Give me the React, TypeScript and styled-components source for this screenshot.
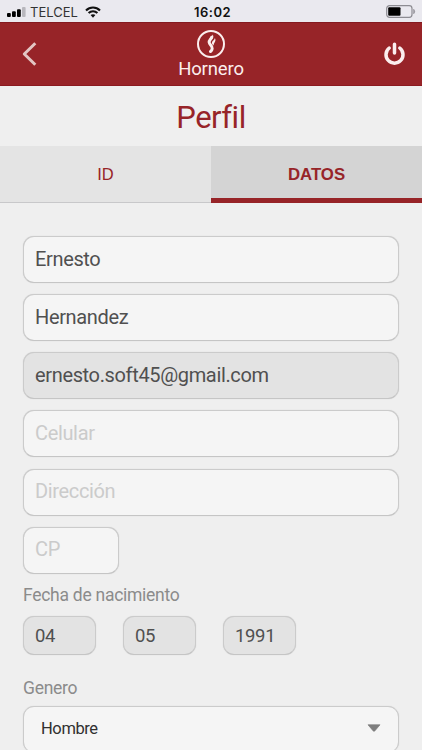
import React from "react";
import styled, { createGlobalStyle } from "styled-components";

const GlobalStyle = createGlobalStyle`
  * { box-sizing: border-box; }
  html, body { margin: 0; height: 750px; overflow: hidden; background: #efefef; }
  body { font-family: Roboto, "Liberation Sans", sans-serif; }
`;

const Screen = styled.div`
  width: 422px;
  height: 750px;
  overflow: hidden;
  background: #efefef;
`;

const StatusBar = styled.div`
  height: 22px;
  display: grid;
  grid-template-columns: 1fr auto 1fr;
  align-items: center;
  padding: 1px 6px 0 7px;
  background: #eae9ef;
  color: #111;
  font-family: Inter, sans-serif;
`;

const Carrier = styled.div`
  display: flex;
  align-items: center;
`;

const CarrierName = styled.span`
  margin: 0 7px 0 4px;
  font-size: 13px;
  line-height: 20px;
  color: #333;
  letter-spacing: 0;
`;

const Clock = styled.div`
  padding-left: 2px;
  font-size: 13px;
  line-height: 20px;
  font-weight: 600;
  letter-spacing: 0.5px;
`;

const Battery = styled.div`
  display: flex;
  justify-content: flex-end;
`;

const Header = styled.header`
  height: 64px;
  display: grid;
  grid-template-columns: 60px 1fr 60px;
  background: #972428;
  border-top: 1px solid #84191f;
  border-bottom: 1px solid #8b1a20;
  color: #fbeeee;
`;

const HeaderButton = styled.button<{ $end?: boolean }>`
  display: flex;
  align-items: center;
  justify-content: ${(p) => (p.$end ? "flex-end" : "flex-start")};
  padding: ${(p) => (p.$end ? "0 16px 1px 0" : "0 0 0 21px")};
  border: 0;
  background: none;
  color: inherit;
`;

const Brand = styled.div`
  display: flex;
  flex-direction: column;
  align-items: center;
  padding-top: 6px;
`;

const BrandName = styled.div`
  font-size: 18.5px;
  line-height: 20px;
  letter-spacing: -0.15px;
`;

const Title = styled.h1`
  margin: 0;
  height: 60px;
  padding-top: 1px;
  text-align: center;
  font-size: 31px;
  line-height: 62px;
  letter-spacing: -0.5px;
  font-weight: 400;
  color: #972428;
`;

const Tabs = styled.div`
  height: 57px;
  display: grid;
  grid-template-columns: 1fr 1fr;
`;

const Tab = styled.button<{ $active?: boolean }>`
  border: 0;
  border-bottom: ${(p) => (p.$active ? "5px solid #972428" : "1px solid #c8c8ca")};
  padding: ${(p) => (p.$active ? "6px 0 0" : "0")};
  background: ${(p) => (p.$active ? "#d4d4d4" : "#e4e4e4")};
  color: #972428;
  font-family: "Liberation Sans", sans-serif;
  font-size: ${(p) => (p.$active ? 16.8 : 16.5)}px;
  font-weight: ${(p) => (p.$active ? 700 : 400)};
`;

const Form = styled.form`
  padding: 33px 23px 0;
`;

const Fields = styled.div`
  display: flex;
  flex-direction: column;
  gap: 11.15px;
`;

const Field = styled.input<{ $width?: number; $compact?: boolean }>`
  display: block;
  width: ${(p) => (p.$width ? `${p.$width}px` : "100%")};
  height: ${(p) => (p.$compact ? 39 : 47)}px;
  padding: ${(p) => (p.$compact ? "2px 11px 0" : "0 11px 2px")};
  border: 1px solid #cbcbcb;
  border-bottom-color: #c5c5c5;
  border-radius: 11px;
  outline: 0;
  background: #f5f5f5;
  box-shadow: 0 0 1px #c8c8c8;
  font-family: Roboto, sans-serif;
  font-size: ${(p) => (p.$compact ? 18.5 : 20)}px;
  letter-spacing: -0.35px;
  color: #505050;
  &::placeholder { color: #cbcbcb; opacity: 1; }
  &:disabled { background: #e3e3e3; color: #505050; }
`;

const Label = styled.div`
  font-size: 17.5px;
  line-height: 20px;
  letter-spacing: -0.27px;
  color: #8b8b8b;
`;

const BirthLabel = styled(Label)`
  margin-top: 11px;
`;

const BirthDate = styled.div`
  display: flex;
  gap: 27px;
  margin: 11px 0 23px;
`;

const SelectBox = styled.div`
  height: 47px;
  margin-top: 8px;
  padding: 0 17px 2px;
  display: flex;
  align-items: center;
  justify-content: space-between;
  border: 1px solid #cbcbcb;
  border-radius: 11px;
  box-shadow: 0 0 1px #c8c8c8;
  background: #f5f5f5;
  font-size: 16.5px;
  letter-spacing: -0.4px;
  color: #303030;
`;

const SignalIcon = () => (
  <svg width="19" height="10" viewBox="0 0 19 10">
    <rect x="0" y="6" width="3.8" height="4" rx="1" />
    <rect x="5" y="4.3" width="3.8" height="5.7" rx="1" />
    <rect x="10" y="2.2" width="3.8" height="7.8" rx="1" />
    <rect x="15" y="0" width="3.6" height="10" rx="1" fill="#b8b7bd" />
  </svg>
);

const WifiIcon = () => (
  <svg width="16" height="12" viewBox="0 0 16 12" fill="none" stroke="#111" strokeWidth="2.1">
    <path d="M1 4.5C5 .5 11 .5 15 4.5M3.6 7.1c2.5-2.4 6.3-2.4 8.8 0" />
    <path d="M5.6 9.1 8 11.7l2.4-2.6c-1.3-1.2-3.5-1.2-4.8 0Z" fill="#111" stroke="none" />
  </svg>
);

const BatteryIcon = () => (
  <svg width="30" height="13" viewBox="0 0 30 13">
    <rect x=".7" y=".7" width="25.3" height="11.6" rx="2.8" fill="none" stroke="#8d8c92" strokeWidth="1.2" />
    <rect x="2.2" y="2.2" width="12.3" height="8.6" rx="1" fill="#000" />
    <path d="M27.7 4.2q2 2.3 0 4.6Z" fill="#8d8c92" stroke="#8d8c92" strokeWidth=".6" />
  </svg>
);

const BackIcon = () => (
  <svg width="17" height="26" viewBox="0 0 17 26" fill="none" stroke="#e3c6c4" strokeWidth="3">
    <path d="M14.3 2.2 3.3 13l11 10.8" strokeLinejoin="round" />
  </svg>
);

const FlameLogo = () => (
  <svg width="30" height="30" viewBox="0 0 30 30">
    <circle cx="15" cy="15" r="13" fill="none" stroke="#fbeeee" strokeWidth="2" />
    <path
      d="M15.7 8.2c-.6 2-3 3-2.5 5.4.4 2.2 3.3 3.2 3 6-.1 1.3-.8 2.2-1.7 2.9"
      fill="none"
      stroke="#fbeeee"
      strokeWidth="3"
      strokeLinecap="round"
    />
    <path fill="#fbeeee" d="M16.4 5.6c1.4 1.3 1.1 2.9 0 4.4l-1.8-1.2c1.1-.8 1.8-1.9 1.8-3.2Z" />
    <path fill="#fbeeee" d="M18.9 9c1.8 3.3-1.3 4.6-1.2 7.6-1.5-1.1-2.1-2.2-1.6-3.7.4-1.3 2.6-2 2.8-3.9Z" />
  </svg>
);

const PowerIcon = () => (
  <svg width="23" height="24" viewBox="0 0 23 24" fill="none" stroke="#fbeeee" strokeWidth="3.5" strokeLinecap="round">
    <path d="M11.5 2.2v8.8M6.2 6a8.5 8.5 0 1 0 10.6 0" />
  </svg>
);

const ArrowIcon = () => (
  <svg width="14" height="8" viewBox="0 0 14 8">
    <path d="M1 .8h12L7.8 6.9q-.8.9-1.6 0Z" fill="#7e7e7e" stroke="#7e7e7e" strokeWidth=".7" strokeLinejoin="round" />
  </svg>
);

export default function App() {
  return (
    <Screen>
      <GlobalStyle />
      <StatusBar>
        <Carrier>
          <SignalIcon />
          <CarrierName>TELCEL</CarrierName>
          <WifiIcon />
        </Carrier>
        <Clock>16:02</Clock>
        <Battery>
          <BatteryIcon />
        </Battery>
      </StatusBar>
      <Header>
        <HeaderButton aria-label="Volver">
          <BackIcon />
        </HeaderButton>
        <Brand>
          <FlameLogo />
          <BrandName>Hornero</BrandName>
        </Brand>
        <HeaderButton $end aria-label="Salir">
          <PowerIcon />
        </HeaderButton>
      </Header>
      <Title>Perfil</Title>
      <Tabs>
        <Tab>ID</Tab>
        <Tab $active>DATOS</Tab>
      </Tabs>
      <Form>
        <Fields>
          <Field defaultValue="Ernesto" />
          <Field defaultValue="Hernandez" />
          <Field defaultValue="ernesto.soft45@gmail.com" disabled />
          <Field placeholder="Celular" />
          <Field placeholder="Dirección" />
          <Field placeholder="CP" $width={96} />
        </Fields>
        <BirthLabel>Fecha de nacimiento</BirthLabel>
        <BirthDate>
          <Field defaultValue="04" disabled $width={73} $compact />
          <Field defaultValue="05" disabled $width={73} $compact />
          <Field defaultValue="1991" disabled $width={73} $compact />
        </BirthDate>
        <Label>Genero</Label>
        <SelectBox>
          <span>Hombre</span>
          <ArrowIcon />
        </SelectBox>
      </Form>
    </Screen>
  );
}
